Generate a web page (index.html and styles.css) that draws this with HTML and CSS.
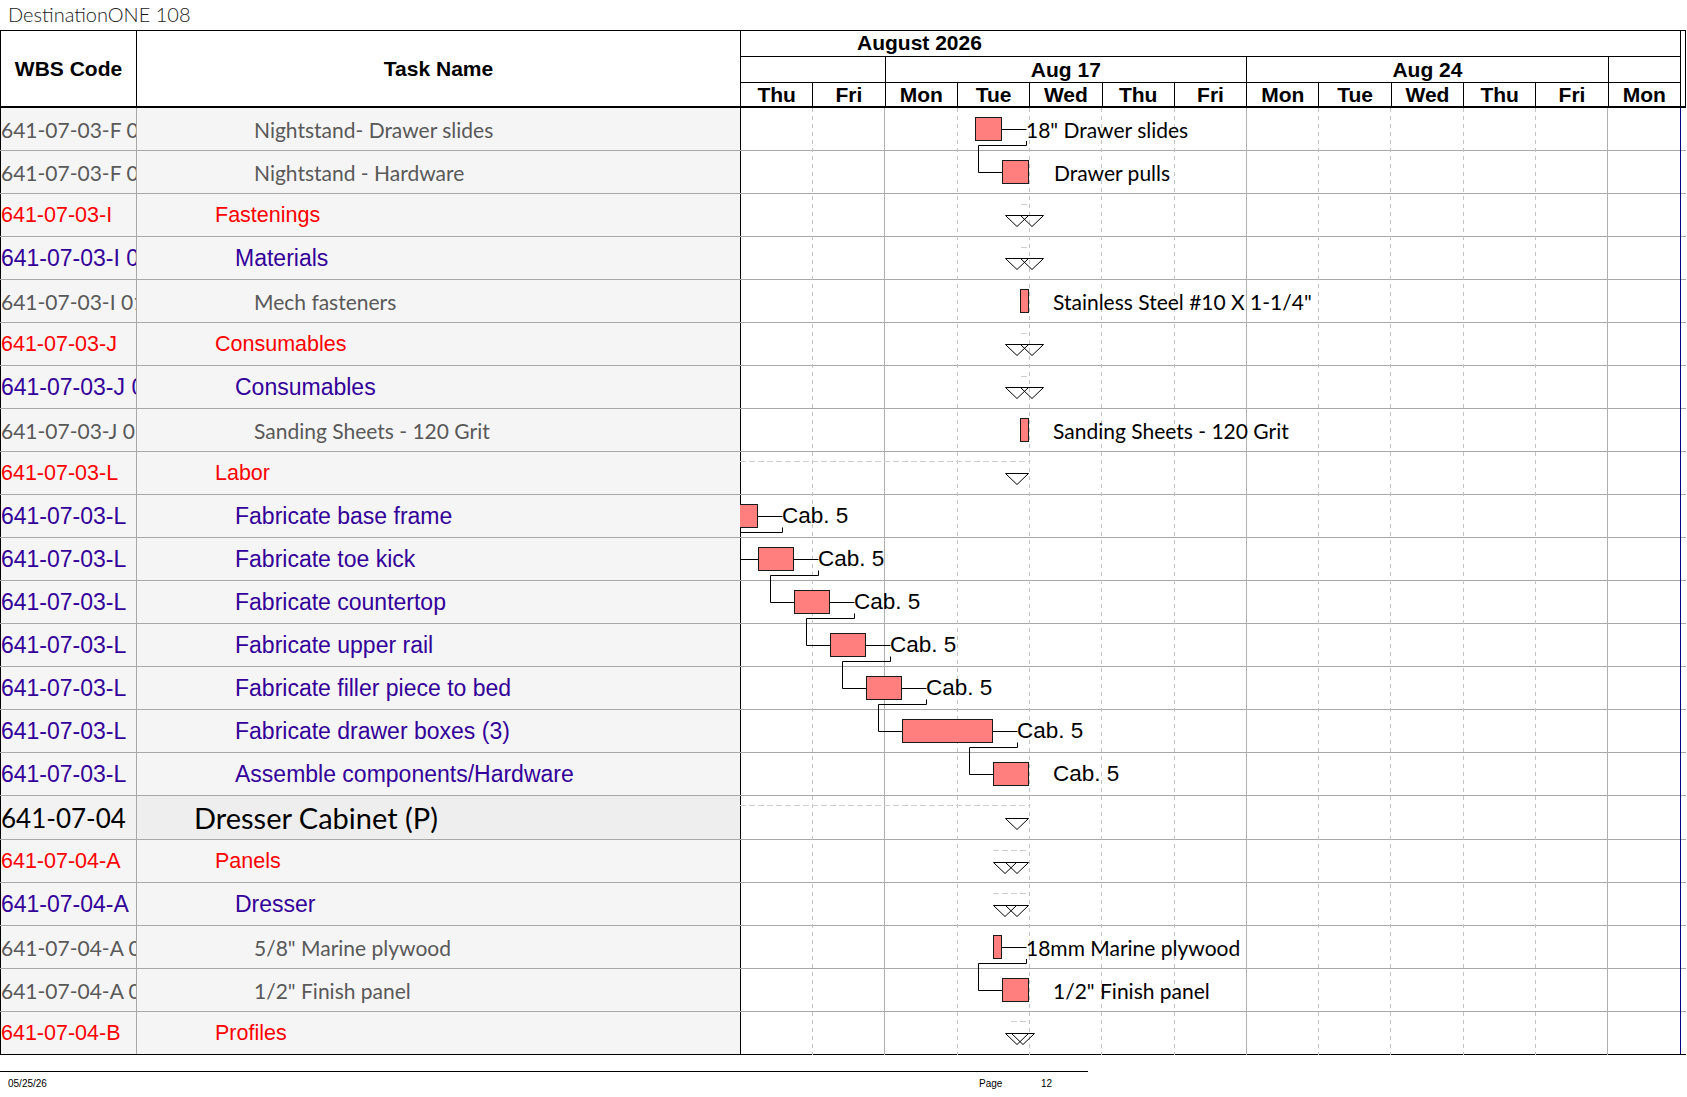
FILE: index.html
```html
<!DOCTYPE html>
<html>
<head>
<meta charset="utf-8">
<link rel="stylesheet" href="styles.css">
</head>
<body>
<div class="title">DestinationONE 108</div>
<div class="sheet">
  <div class="head">
    <div class="h-wbs">WBS Code</div>
    <div class="h-task">Task Name</div>
    <div class="h-chart">
      <div class="h-month">August 2026</div>
      <div class="h-week s2"></div>
      <div class="h-week s5">Aug 17</div>
      <div class="h-week s5">Aug 24</div>
      <div class="h-week s1"></div>
      <div class="h-day">Thu</div>
      <div class="h-day">Fri</div>
      <div class="h-day">Mon</div>
      <div class="h-day">Tue</div>
      <div class="h-day">Wed</div>
      <div class="h-day">Thu</div>
      <div class="h-day">Fri</div>
      <div class="h-day">Mon</div>
      <div class="h-day">Tue</div>
      <div class="h-day">Wed</div>
      <div class="h-day">Thu</div>
      <div class="h-day">Fri</div>
      <div class="h-day">Mon</div>
    </div>
    <div class="h-strip"></div>
  </div>

  <div class="body">
    <div class="row l3"><div class="c-wbs">641-07-03-F 01</div><div class="c-task">Nightstand- Drawer slides</div><div class="c-chart"></div></div>
    <div class="row l3"><div class="c-wbs">641-07-03-F 02</div><div class="c-task">Nightstand - Hardware</div><div class="c-chart"></div></div>
    <div class="row l1"><div class="c-wbs">641-07-03-I</div><div class="c-task">Fastenings</div><div class="c-chart"></div></div>
    <div class="row l2"><div class="c-wbs">641-07-03-I 01</div><div class="c-task">Materials</div><div class="c-chart"></div></div>
    <div class="row l3"><div class="c-wbs">641-07-03-I 01 01</div><div class="c-task">Mech fasteners</div><div class="c-chart"></div></div>
    <div class="row l1"><div class="c-wbs">641-07-03-J</div><div class="c-task">Consumables</div><div class="c-chart"></div></div>
    <div class="row l2"><div class="c-wbs">641-07-03-J 01</div><div class="c-task">Consumables</div><div class="c-chart"></div></div>
    <div class="row l3"><div class="c-wbs">641-07-03-J 01 01</div><div class="c-task">Sanding Sheets - 120 Grit</div><div class="c-chart"></div></div>
    <div class="row l1"><div class="c-wbs">641-07-03-L</div><div class="c-task">Labor</div><div class="c-chart"></div></div>
    <div class="row l2"><div class="c-wbs">641-07-03-L</div><div class="c-task">Fabricate base frame</div><div class="c-chart"></div></div>
    <div class="row l2"><div class="c-wbs">641-07-03-L</div><div class="c-task">Fabricate toe kick</div><div class="c-chart"></div></div>
    <div class="row l2"><div class="c-wbs">641-07-03-L</div><div class="c-task">Fabricate countertop</div><div class="c-chart"></div></div>
    <div class="row l2"><div class="c-wbs">641-07-03-L</div><div class="c-task">Fabricate upper rail</div><div class="c-chart"></div></div>
    <div class="row l2"><div class="c-wbs">641-07-03-L</div><div class="c-task">Fabricate filler piece to bed</div><div class="c-chart"></div></div>
    <div class="row l2"><div class="c-wbs">641-07-03-L</div><div class="c-task">Fabricate drawer boxes (3)</div><div class="c-chart"></div></div>
    <div class="row l2"><div class="c-wbs">641-07-03-L</div><div class="c-task">Assemble components/Hardware</div><div class="c-chart"></div></div>
    <div class="row l0"><div class="c-wbs">641-07-04</div><div class="c-task">Dresser Cabinet (P)</div><div class="c-chart"></div></div>
    <div class="row l1"><div class="c-wbs">641-07-04-A</div><div class="c-task">Panels</div><div class="c-chart"></div></div>
    <div class="row l2"><div class="c-wbs">641-07-04-A</div><div class="c-task">Dresser</div><div class="c-chart"></div></div>
    <div class="row l3"><div class="c-wbs">641-07-04-A 01</div><div class="c-task">5/8" Marine plywood</div><div class="c-chart"></div></div>
    <div class="row l3"><div class="c-wbs">641-07-04-A 02</div><div class="c-task">1/2" Finish panel</div><div class="c-chart"></div></div>
    <div class="row l1 last"><div class="c-wbs">641-07-04-B</div><div class="c-task">Profiles</div><div class="c-chart"></div></div>

    <svg class="gantt" width="946" height="947" viewBox="0 0 946 947" xmlns="http://www.w3.org/2000/svg">
      <g class="grid-dash">
        <line x1="72.5" y1="0" x2="72.5" y2="947"/>
        <line x1="217.5" y1="0" x2="217.5" y2="947"/>
        <line x1="289.5" y1="0" x2="289.5" y2="947"/>
        <line x1="361.5" y1="0" x2="361.5" y2="947"/>
        <line x1="434.5" y1="0" x2="434.5" y2="947"/>
        <line x1="578.5" y1="0" x2="578.5" y2="947"/>
        <line x1="650.5" y1="0" x2="650.5" y2="947"/>
        <line x1="723.5" y1="0" x2="723.5" y2="947"/>
        <line x1="795.5" y1="0" x2="795.5" y2="947"/>
      </g>
      <g class="grid-solid">
        <line x1="144.5" y1="0" x2="144.5" y2="947"/>
        <line x1="506.5" y1="0" x2="506.5" y2="947"/>
        <line x1="867.5" y1="0" x2="867.5" y2="947"/>
      </g>
      <line class="edge" x1="940.5" y1="0" x2="940.5" y2="946"/>

      <g class="sumline">
        <line x1="281" y1="96.5" x2="289" y2="96.5"/>
        <line x1="281" y1="139.5" x2="289" y2="139.5"/>
        <line x1="281" y1="225.5" x2="289" y2="225.5"/>
        <line x1="281" y1="268.5" x2="289" y2="268.5"/>
        <line x1="0" y1="353.5" x2="289" y2="353.5"/>
        <line x1="0" y1="697.5" x2="289" y2="697.5"/>
        <line x1="253" y1="742.5" x2="289" y2="742.5"/>
        <line x1="253" y1="785.5" x2="289" y2="785.5"/>
        <line x1="271" y1="913.5" x2="289" y2="913.5"/>
      </g>

      <g class="tri">
        <polygon points="265.5,107.5 288.5,107.5 277,118.5"/>
        <polygon points="280.5,107.5 303.5,107.5 292,118.5"/>
        <polygon points="265.5,150.5 288.5,150.5 277,161.5"/>
        <polygon points="280.5,150.5 303.5,150.5 292,161.5"/>
        <polygon points="265.5,236.5 288.5,236.5 277,247.5"/>
        <polygon points="280.5,236.5 303.5,236.5 292,247.5"/>
        <polygon points="265.5,279.5 288.5,279.5 277,290.5"/>
        <polygon points="280.5,279.5 303.5,279.5 292,290.5"/>
        <polygon points="265.5,365.5 288.5,365.5 277,376.5"/>
        <polygon points="265.5,710.5 288.5,710.5 277,721.5"/>
        <polygon points="253.5,754.5 276.5,754.5 265,765.5"/>
        <polygon points="265.5,754.5 288.5,754.5 277,765.5"/>
        <polygon points="253.5,797.5 276.5,797.5 265,808.5"/>
        <polygon points="265.5,797.5 288.5,797.5 277,808.5"/>
        <polygon points="265.5,925.5 288.5,925.5 277,936.5"/>
        <polygon points="271.5,925.5 294.5,925.5 283,936.5"/>
      </g>

      <g class="link">
        <path d="M261.5 21.5 H286.5 M286.5 33 V37.5 H238.5 V64.5 H262.5"/>
        <path d="M17.5 408.5 H42.5 M42.5 419.5 V424.5 H-6"/>
        <path d="M-6 451.5 H18.5 M53.5 451.5 H78.5 M78.5 462.5 V467.5 H30.5 V494.5 H54.5"/>
        <path d="M89.5 494.5 H114.5 M114.5 505.5 V510.5 H66.5 V537.5 H90.5"/>
        <path d="M125.5 537.5 H150.5 M150.5 548.5 V553.5 H102.5 V580.5 H126.5"/>
        <path d="M161.5 580.5 H186.5 M186.5 591.5 V596.5 H138.5 V623.5 H162.5"/>
        <path d="M252.5 623.5 H277.5 M277.5 634.5 V639.5 H229.5 V666.5 H253.5"/>
        <path d="M261.5 839.5 H286.5 M286.5 851 V855.5 H238.5 V882.5 H262.5"/>
      </g>

      <g class="bar">
        <rect x="235.5" y="9.5" width="26" height="23"/>
        <rect x="262.5" y="52.5" width="26" height="23"/>
        <rect x="280.5" y="181.5" width="8" height="23"/>
        <rect x="280.5" y="310.5" width="8" height="23"/>
        <rect x="-2.5" y="396.5" width="20" height="23"/>
        <rect x="18.5" y="439.5" width="35" height="23"/>
        <rect x="54.5" y="482.5" width="35" height="23"/>
        <rect x="90.5" y="525.5" width="35" height="23"/>
        <rect x="126.5" y="568.5" width="35" height="23"/>
        <rect x="162.5" y="611.5" width="90" height="23"/>
        <rect x="253.5" y="654.5" width="35" height="23"/>
        <rect x="253.5" y="827.5" width="8" height="23"/>
        <rect x="262.5" y="870.5" width="26" height="23"/>
      </g>

      <g class="lbl">
        <text x="286" y="30">18" Drawer slides</text>
        <text x="314" y="73">Drawer pulls</text>
        <text x="313" y="202">Stainless Steel #10 X 1-1/4"</text>
        <text x="313" y="331">Sanding Sheets - 120 Grit</text>
        <text x="286" y="848">18mm Marine plywood</text>
        <text x="313" y="891">1/2" Finish panel</text>
      </g>
      <g class="lbl-a">
        <text x="42" y="415">Cab. 5</text>
        <text x="78" y="458">Cab. 5</text>
        <text x="114" y="501">Cab. 5</text>
        <text x="150" y="544">Cab. 5</text>
        <text x="186" y="587">Cab. 5</text>
        <text x="277" y="630">Cab. 5</text>
        <text x="313" y="673">Cab. 5</text>
      </g>
    </svg>
  </div>
</div>

<div class="footer">
  <div class="f-line"></div>
  <div class="f-text">
    <span class="f-date">05/25/26</span>
    <span class="f-page">Page</span>
    <span class="f-num">12</span>
  </div>
</div>
</body>
</html>
```

FILE: styles.css
```css
* { box-sizing: border-box; }

html, body {
  margin: 0;
  padding: 0;
  background: #ffffff;
}

body {
  width: 1687px;
  height: 1097px;
  overflow: hidden;
  font-family: "Liberation Sans", Arial, sans-serif;
  color: #000;
}

.title {
  height: 30px;
  padding-left: 8px;
  font-family: Lato, "Open Sans", sans-serif;
  font-weight: 300;
  font-size: 20px;
  line-height: 29px;
  color: #1a1a1a;
}

.sheet {
  width: 1686px;
}

/* ---------- header ---------- */
.head {
  display: grid;
  grid-template-columns: 137px 604px 940px 5px;
  height: 78px;
  border-top: 1px solid #000;
  border-bottom: 2px solid #000;
}

.h-wbs,
.h-task {
  display: flex;
  align-items: center;
  justify-content: center;
  font-weight: bold;
  font-size: 21px;
}

.h-wbs {
  border-left: 1px solid #000;
  border-right: 1px solid #000;
}

.h-task {
  border-right: 1px solid #000;
}

.h-chart {
  display: grid;
  grid-template-columns: repeat(13, 1fr);
  grid-template-rows: 26px 26px 23px;
  font-weight: bold;
  font-size: 21px;
}

.h-month {
  grid-column: 1 / span 13;
  border-right: 1px solid #000;
  border-bottom: 1px solid #000;
  padding-left: 116px;
  line-height: 24px;
}

.h-week {
  border-right: 1px solid #000;
  border-bottom: 1px solid #000;
  text-align: center;
  line-height: 25px;
}

.s1 { grid-column: span 1; }
.s2 { grid-column: span 2; }
.s5 { grid-column: span 5; }

.h-day {
  border-right: 1px solid #000;
  text-align: center;
  line-height: 23px;
}

.h-strip {
  border-right: 1px solid #000;
}

/* ---------- body rows ---------- */
.body {
  position: relative;
}

.row {
  display: grid;
  grid-template-columns: 137px 604px 945px;
  height: 43px;
  border-bottom: 1px solid #a8a8a8;
}

.row.l0 {
  height: 44px;
}

.row.last {
  border-bottom: 1px solid #000;
}

.c-wbs {
  display: flex;
  align-items: center;
  overflow: hidden;
  white-space: nowrap;
  background: #f5f5f5;
  border-left: 1px solid #000;
  border-right: 1px solid #a8a8a8;
}

.c-task {
  display: flex;
  align-items: center;
  white-space: nowrap;
  overflow: hidden;
  background: #f5f5f5;
  border-right: 1px solid #000;
}

.c-chart {
  background: #ffffff;
}

/* level 0 : big black summary */
.l0 .c-wbs,
.l0 .c-task {
  font-family: Lato, "Open Sans", sans-serif;
  color: #000;
}
.l0 .c-wbs { background: #f2f2f2; font-size: 26px; }
.l0 .c-task { background: #eeeeee; padding-left: 57px; font-size: 29px; }

/* level 1 : red */
.l1 .c-wbs,
.l1 .c-task {
  font-family: "Liberation Sans", Arial, sans-serif;
  font-size: 21.5px;
  color: #ff0000;
}
.l1 .c-task { padding-left: 78px; }

/* level 2 : purple */
.l2 .c-wbs,
.l2 .c-task {
  font-family: "Liberation Sans", Arial, sans-serif;
  font-size: 23px;
  color: #330099;
}
.l2 .c-task { padding-left: 98px; }

/* level 3 : grey detail */
.l3 .c-wbs,
.l3 .c-task {
  font-family: Lato, "Open Sans", sans-serif;
  font-size: 21px;
  color: #595959;
}
.l3 .c-task { padding-left: 117px; }

/* ---------- gantt overlay ---------- */
.gantt {
  position: absolute;
  left: 740px;
  top: 0;
  overflow: hidden;
  pointer-events: none;
}

.grid-dash line {
  stroke: #c4c4c4;
  stroke-width: 1;
  stroke-dasharray: 4 4;
}

.grid-solid line {
  stroke: #b0b0b0;
  stroke-width: 1;
}

.edge {
  stroke: #000080;
  stroke-width: 1;
}

.sumline line {
  stroke: #d0d0d0;
  stroke-width: 1;
  stroke-dasharray: 6 3;
}

.tri polygon {
  fill: none;
  stroke: #000;
  stroke-width: 1;
}

.link path {
  fill: none;
  stroke: #000;
  stroke-width: 1;
}

.bar rect {
  fill: #ff7f7f;
  stroke: #1a1a1a;
  stroke-width: 1;
}

.lbl text {
  font-family: Lato, "Open Sans", sans-serif;
  font-size: 21px;
  fill: #000;
}

.lbl-a text {
  font-family: "Liberation Sans", Arial, sans-serif;
  font-size: 22.5px;
  fill: #000;
}

/* ---------- footer ---------- */
.footer {
  margin-top: 16px;
}

.f-line {
  width: 1088px;
  border-top: 1px solid #000;
}

.f-text {
  height: 24px;
  font-family: "Liberation Sans", Arial, sans-serif;
  font-size: 10px;
  line-height: 24px;
  display: flex;
}

.f-date {
  padding-left: 8px;
  width: 979px;
}

.f-page {
  width: 62px;
}
```
